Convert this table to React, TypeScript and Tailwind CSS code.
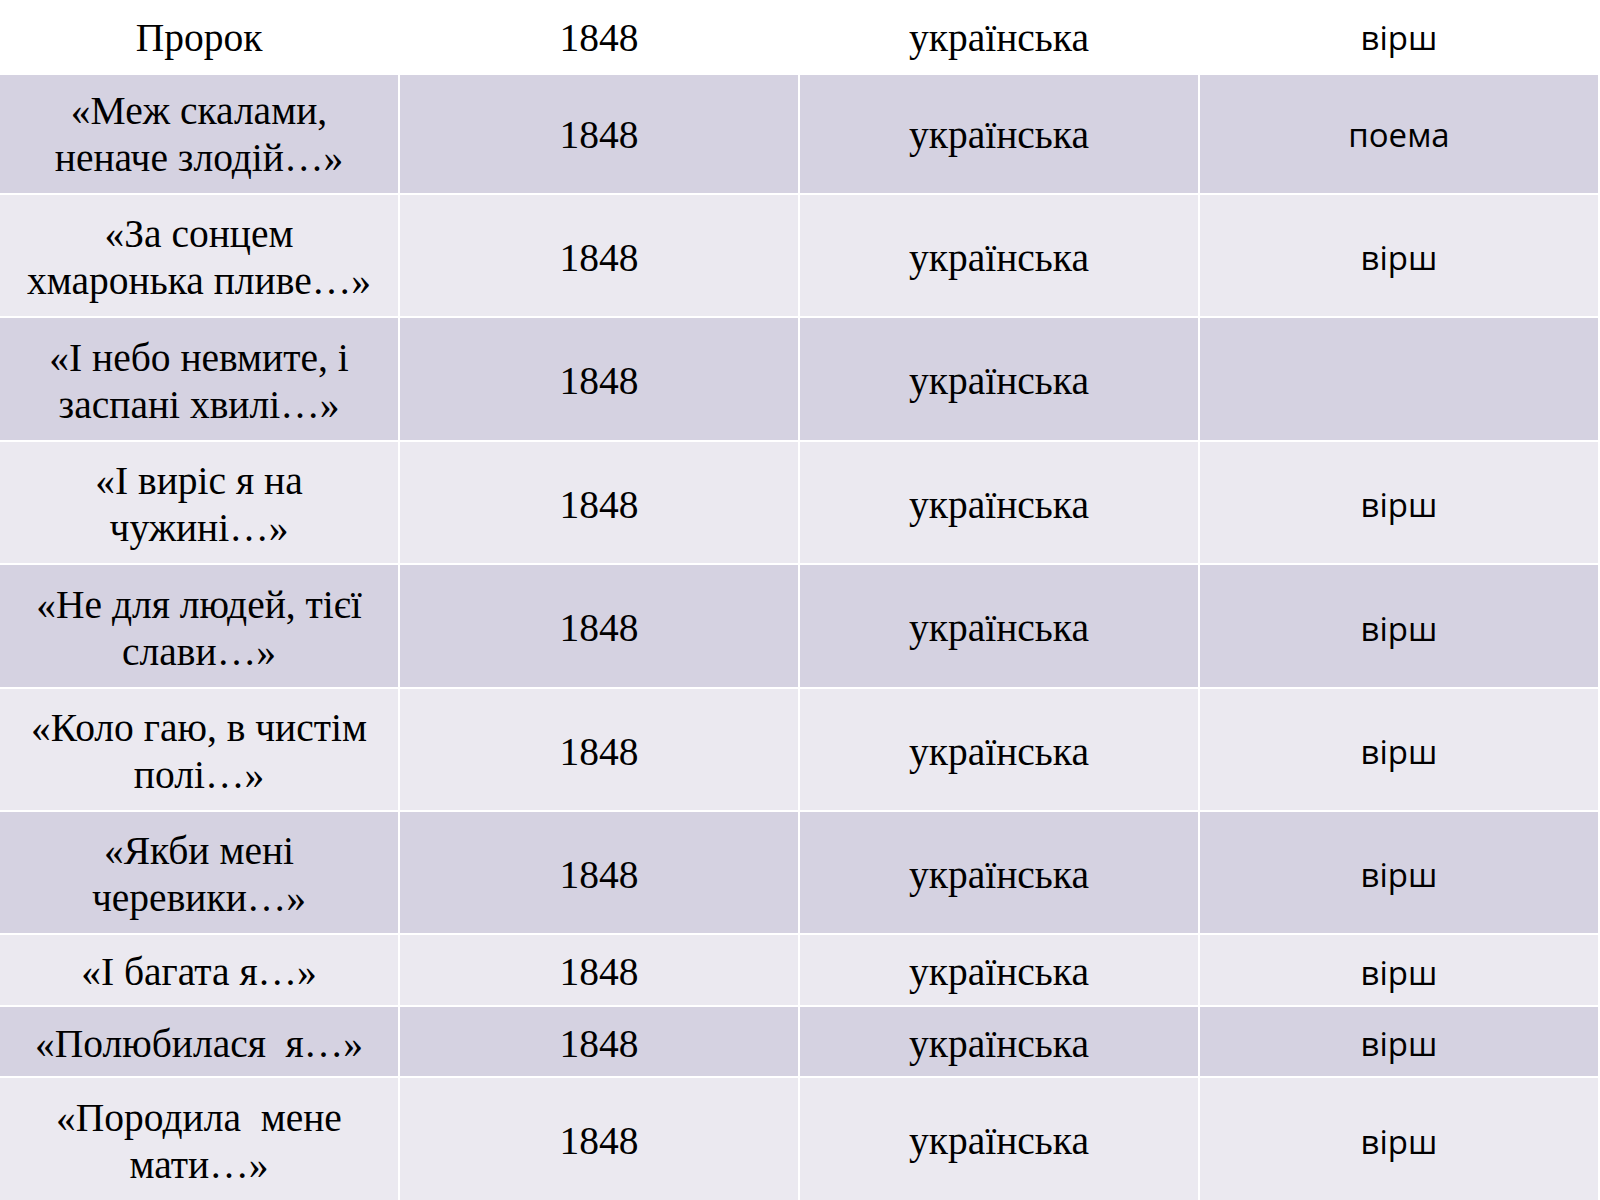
import React from "react";

type Row = { title: string[]; genre: string; h: number; dark: boolean; white?: boolean };

const rows: Row[] = [
  { title: ["Пророк"], genre: "вірш", h: 73, dark: false, white: true },
  { title: ["«Меж скалами,", "неначе злодій…»"], genre: "поема", h: 118, dark: true },
  { title: ["«За сонцем", "хмаронька пливе…»"], genre: "вірш", h: 121, dark: false },
  { title: ["«І небо невмите, і", "заспані хвилі…»"], genre: "", h: 122, dark: true },
  { title: ["«І виріс я на", "чужині…»"], genre: "вірш", h: 121, dark: false },
  { title: ["«Не для людей, тієї", "слави…»"], genre: "вірш", h: 122, dark: true },
  { title: ["«Коло гаю, в чистім", "полі…»"], genre: "вірш", h: 121, dark: false },
  { title: ["«Якби мені", "черевики…»"], genre: "вірш", h: 121, dark: true },
  { title: ["«І багата я…»"], genre: "вірш", h: 70, dark: false },
  { title: ["«Полюбилася  я…»"], genre: "вірш", h: 69, dark: true },
  { title: ["«Породила  мене", "мати…»"], genre: "вірш", h: 122, dark: false },
];

const serif =
  "font-[family-name:'Liberation_Serif','Times_New_Roman',serif] text-[39.5px] leading-[47px] text-black";
const sans =
  "font-[family-name:'Open_Sans','Noto_Sans',sans-serif] text-[33px] leading-[44px] text-black";

export default function App() {
  return (
    <div className="w-[1600px] h-[1200px] overflow-hidden bg-white flex flex-col gap-[2px]">
      {rows.map((r, i) => {
        const bg = r.white
          ? "bg-white pt-[3px]"
          : i === 1
          ? "bg-[#d5d2e1] pt-[2px]"
          : r.dark
          ? "bg-[#d5d2e1] pt-[5px]"
          : "bg-[#ebe9f0] pt-[5px]";
        return (
          <div
            key={i}
            className="grid grid-cols-[398px_398px_398px_398px] gap-x-[2px] shrink-0"
            style={{ height: r.h }}
          >
            <div className={`${bg} flex flex-col items-center justify-center ${serif} whitespace-pre`}>
              {r.title.map((t, j) => (
                <span key={j}>{t}</span>
              ))}
            </div>
            <div className={`${bg} flex items-center justify-center ${serif}`}>1848</div>
            <div className={`${bg} flex items-center justify-center ${serif}`}>українська</div>
            <div className={`${bg} flex items-center justify-center ${sans}`}>{r.genre}</div>
          </div>
        );
      })}
    </div>
  );
}
